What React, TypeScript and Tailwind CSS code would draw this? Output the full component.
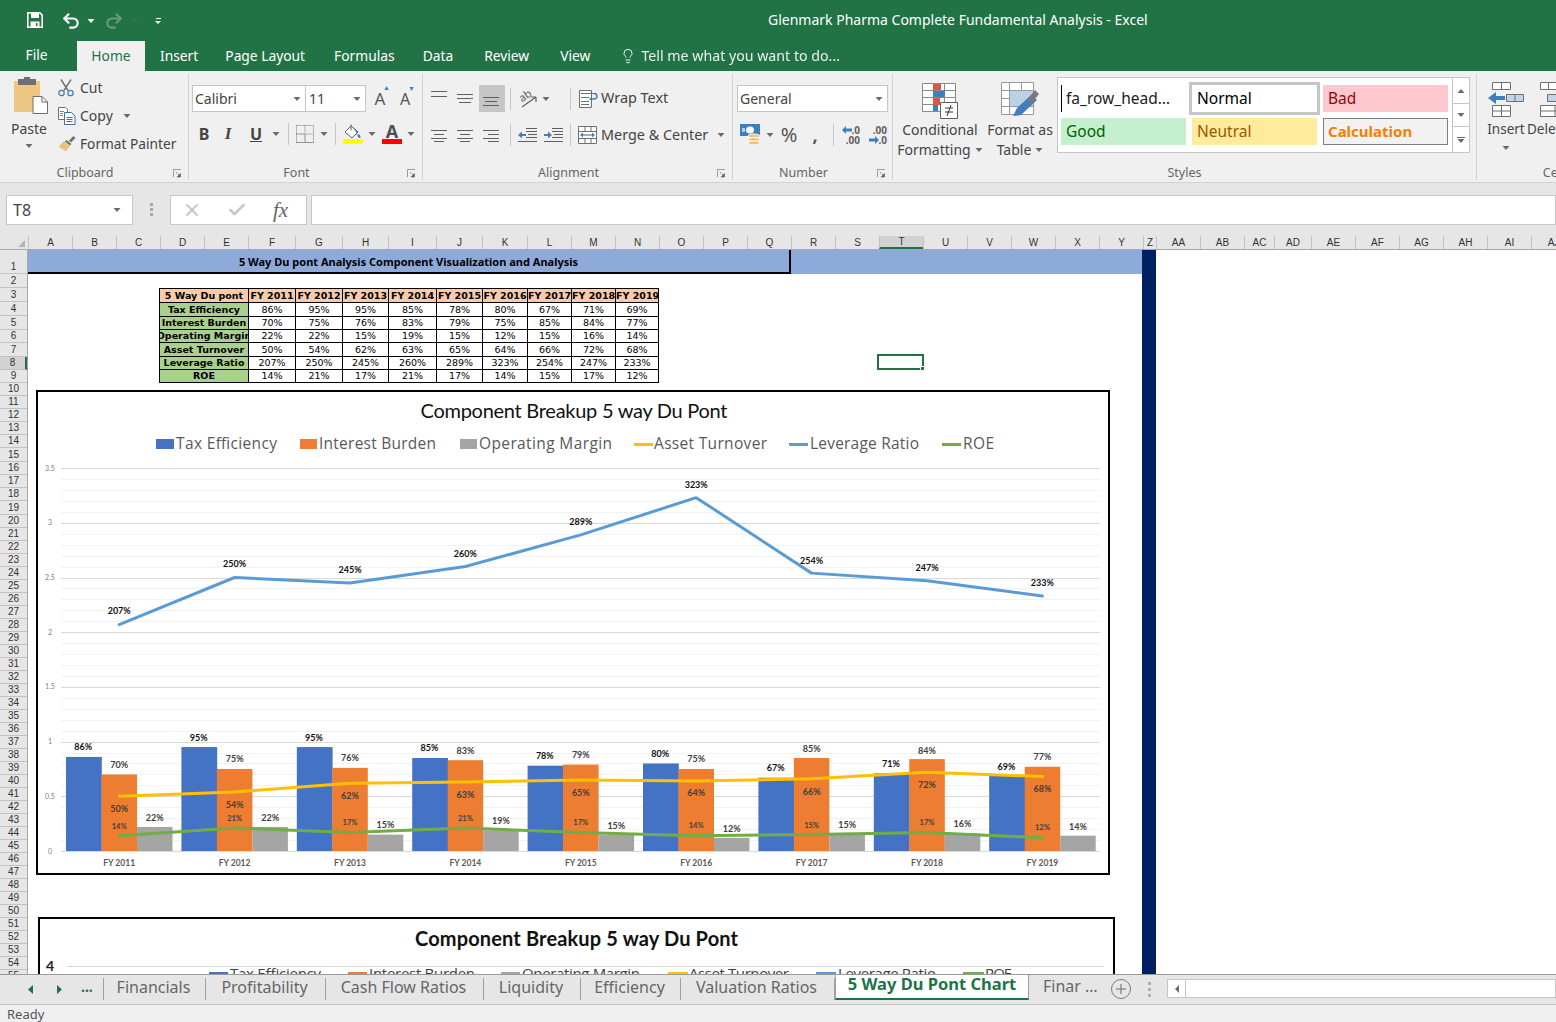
import React from 'react';
import { Undo2, Redo2, Lightbulb, Plus, X, Check } from 'lucide-react';

const years = ['FY 2011', 'FY 2012', 'FY 2013', 'FY 2014', 'FY 2015', 'FY 2016', 'FY 2017', 'FY 2018', 'FY 2019'];
const tax = [86, 95, 95, 85, 78, 80, 67, 71, 69];
const interest = [70, 75, 76, 83, 79, 75, 85, 84, 77];
const margin = [22, 22, 15, 19, 15, 12, 15, 16, 14];
const asset = [50, 54, 62, 63, 65, 64, 66, 72, 68];
const leverage = [207, 250, 245, 260, 289, 323, 254, 247, 233];
const roe = [14, 21, 17, 21, 17, 14, 15, 17, 12];

const taxY = [747, 738, 738, 748, 756, 754, 768, 764, 767];
const interestY = [765, 759, 758, 751, 755, 759, 749, 751, 757];
const marginY = [818, 818, 825, 821, 826, 829, 825, 824, 827];
const assetY = [809, 805, 796, 795, 793, 793, 792, 785, 789];
const leverageY = [611, 564, 570, 554, 522, 485, 561, 568, 583];
const roeY = [826, 818, 822, 818, 822, 825, 825, 822, 827];

const tableRows: [string, number[], string][] = [
  ['Tax Efficiency', tax, 'h-[14px]'],
  ['Interest Burden', interest, 'h-[13px]'],
  ['Operating Margin', margin, 'h-[13px]'],
  ['Asset Turnover', asset, 'h-[14px]'],
  ['Leverage Ratio', leverage, 'h-[13px]'],
  ['ROE', roe, 'h-[13px]'],
];

// rows that sit one pixel taller in the sheet
const tallRows = [2, 3, 4, 5, 7, 15, 19];

const columns: [string, string][] = [
  ['A', 'w-[44px]'], ['B', 'w-[44px]'], ['C', 'w-[44px]'], ['D', 'w-[44px]'], ['E', 'w-[44px]'],
  ['F', 'w-[47px]'], ['G', 'w-[47px]'], ['H', 'w-[46px]'], ['I', 'w-[48px]'], ['J', 'w-[46px]'],
  ['K', 'w-[45px]'], ['L', 'w-[44px]'], ['M', 'w-[44px]'], ['N', 'w-[44px]'], ['O', 'w-[44px]'],
  ['P', 'w-[44px]'], ['Q', 'w-[44px]'], ['R', 'w-[44px]'], ['S', 'w-[44px]'], ['T', 'w-[44px]'],
  ['U', 'w-[44px]'], ['V', 'w-[44px]'], ['W', 'w-[44px]'], ['X', 'w-[44px]'], ['Y', 'w-[44px]'],
  ['Z', 'w-[13px]'], ['AA', 'w-[44px]'], ['AB', 'w-[44px]'], ['AC', 'w-[30px]'], ['AD', 'w-[37px]'],
  ['AE', 'w-[44px]'], ['AF', 'w-[44px]'], ['AG', 'w-[44px]'], ['AH', 'w-[44px]'], ['AI', 'w-[44px]'],
  ['AJ', 'w-[44px]'],
];

const sheetTabs: [string, string][] = [
  ['Financials', 'w-[102px]'],
  ['Profitability', 'w-[120px]'],
  ['Cash Flow Ratios', 'w-[158px]'],
  ['Liquidity', 'w-[97px]'],
  ['Efficiency', 'w-[100px]'],
  ['Valuation Ratios', 'w-[154px]'],
];

const Caret = ({ className = '' }: { className?: string }) => (
  <svg width="8" height="4" viewBox="0 0 8 4" className={`flex-none ${className}`}>
    <path d="M0.5 0h7L4 4z" fill="#6a6a6a" />
  </svg>
);

const Launcher = () => (
  <svg width="9" height="9" viewBox="0 0 9 9" className="flex-none">
    <path d="M0.5 8V0.5H8" fill="none" stroke="#9a9a9a" />
    <path d="M3 3l4 4M7.5 4.5v3.5H4z" fill="#666" stroke="#666" strokeWidth="0.7" />
  </svg>
);

const Sep = ({ className = '' }: { className?: string }) => <div className={`w-px h-[22px] bg-[#c6c6c6] flex-none ${className}`} />;

// horizontal text lines used by the alignment and indent buttons
const Lines = ({ rows }: { rows: [number, number, number][] }) => (
  <svg width="18" height="16" viewBox="0 0 18 16">
    {rows.map(([y, a, b], i) => (
      <path key={i} d={`M${a} ${y + 0.5}H${b}`} stroke="#5f5f5f" />
    ))}
  </svg>
);

const PasteIcon = () => (
  <svg width="36" height="38" viewBox="0 0 36 38" className="ml-[4px]">
    <path d="M1 4h26v31H1z" fill="#eec683" />
    <path d="M5 2h18v6H5z" fill="#6f6f6f" />
    <path d="M11 0h6v3h-6z" fill="#6f6f6f" />
    <path d="M20 19.5h9l5.500 5.500v11.500H20z" fill="#fff" stroke="#6f6f6f" />
    <path d="M29 19.500v5.500h5.500" fill="none" stroke="#6f6f6f" />
  </svg>
);

const CutIcon = () => (
  <svg width="16" height="18" viewBox="0 0 16 18">
    <path d="M3 0.500l7 11M13 0.500l-7 11" stroke="#6f6f6f" strokeWidth="1.400" fill="none" />
    <circle cx="3.500" cy="14" r="2.700" fill="none" stroke="#3f7fbf" strokeWidth="1.300" />
    <circle cx="12.500" cy="14" r="2.700" fill="none" stroke="#3f7fbf" strokeWidth="1.300" />
  </svg>
);

const CopyIcon = () => (
  <svg width="18" height="18" viewBox="0 0 18 18">
    <path d="M0.500 0.500h7l2 2v10h-9z" fill="#fff" stroke="#6f6f6f" />
    <path d="M6.500 5.500h7l3.500 3.500v8.500H6.500z" fill="#fff" stroke="#3f6f9f" />
    <path d="M8.500 10.500h6M8.500 12.500h6M8.500 14.500h6" stroke="#3f6f9f" />
    <path d="M2 4.500h4M2 6.500h3M2 8.500h3" stroke="#7f7f7f" />
  </svg>
);

const PainterIcon = () => (
  <svg width="18" height="16" viewBox="0 0 18 16">
    <path d="M6 5l6 5-4 5.500-7.500-5z" fill="#e9c27f" />
    <path d="M7 5.500l5 4 1.500-1.500-5-4z" fill="#6f6f6f" />
    <path d="M11 4.500l4.500-4.500 2 2-4.500 4.500z" fill="#6f6f6f" />
  </svg>
);

const BorderIcon = () => (
  <svg width="18" height="18" viewBox="0 0 18 18">
    <path d="M0.500 0.500h17v17M0.500 0.500v17M9 0.500v8M9.500 9h8" fill="none" stroke="#7a7a7a" strokeDasharray="1 1" />
    <path d="M0 17.500h18M9 9v8M0 9h9" fill="none" stroke="#7a7a7a" strokeWidth="0.800" />
  </svg>
);

const FillIcon = () => (
  <svg width="20" height="20" viewBox="0 0 20 20">
    <path d="M2 8l6-6 7 6-6 6z" fill="#fff" stroke="#5f5f5f" />
    <path d="M8 0.500v6" stroke="#5f5f5f" />
    <path d="M10 3l5 5-2 2.500h3.500c1 1.500 1.500 2.500 0.500 3.500-2 0-3-2-2.500-3.500z" fill="#3f7fbf" />
    <path d="M0 15h20v5H0z" fill="#ffff00" />
  </svg>
);

const FontColorIcon = () => (
  <div className="flex flex-col items-center w-5 h-5 relative">
    <span className="text-[18px] leading-[15px] font-bold text-[#505050]">A</span>
    <div className="w-5 h-[5px] bg-[#ff0000]" />
  </div>
);

const OrientIcon = () => (
  <svg width="20" height="20" viewBox="0 0 20 20">
    <text x="1" y="11" fontSize="11" fill="#5f5f5f" transform="rotate(-35 6 9)">ab</text>
    <path d="M3 18L17 8M17 8h-5M17 8v5" fill="none" stroke="#5f5f5f" strokeWidth="1.200" />
  </svg>
);

const WrapIcon = () => (
  <svg width="20" height="18" viewBox="0 0 20 18">
    <path d="M0.500 0.500h12v17h-12z" fill="#fff" stroke="#6f6f6f" />
    <path d="M2 3.500h14M2 7.500h8M2 11.500h8M2 14.500h8" stroke="#6f6f6f" />
    <path d="M15 3.500c4 0 4 5.500 0 5.500h-3" fill="none" stroke="#3f7fbf" strokeWidth="1.400" />
    <path d="M10 9l3-2.500v5z" fill="#3f7fbf" />
  </svg>
);

const MergeIcon = () => (
  <svg width="20" height="18" viewBox="0 0 20 18">
    <path d="M0.500 0.500h18v17h-18zM0.500 5.500h18M0.500 12.500h18M7 0.500v5M13 0.500v5M7 12.500v5M13 12.500v5" fill="#fff" stroke="#6f6f6f" />
    <path d="M3 9h13" stroke="#3f7fbf" strokeWidth="1.200" />
    <path d="M2 9l3-2.500v5zM17 9l-3-2.500v5z" fill="#3f7fbf" />
  </svg>
);

const IndentIcon = ({ flip }: { flip?: boolean }) => (
  <svg width="20" height="16" viewBox="0 0 20 16">
    <path d="M8 1.500h11M8 4.500h11M10 7.500h9M8 10.500h11M0 14.500h19" stroke="#5f5f5f" />
    {flip ? (
      <path d="M0 7h4V4.500l4 3.500-4 3.500V9H0z" fill="#3f7fbf" />
    ) : (
      <path d="M8 7H4V4.500L0 8l4 3.500V9h4z" fill="#3f7fbf" />
    )}
  </svg>
);

const MoneyIcon = () => (
  <svg width="22" height="22" viewBox="0 0 22 22">
    <path d="M0 0h20v12H0z" fill="#3f7fbf" />
    <ellipse cx="10" cy="6" rx="4" ry="3.500" fill="#fff" />
    <path d="M2 4h3v4H2z" fill="#fff" opacity="0.600" />
    <ellipse cx="14" cy="12" rx="6" ry="2" fill="#f0c27a" stroke="#fff" />
    <ellipse cx="14" cy="15.500" rx="6" ry="2" fill="#f0c27a" stroke="#fff" />
    <ellipse cx="14" cy="19" rx="6" ry="2" fill="#f0c27a" stroke="#fff" />
  </svg>
);

const DecimalIcon = ({ more }: { more?: boolean }) => (
  <div className="relative w-[18px] h-[20px] text-[10px] leading-[10px] font-bold text-[#5f5f5f] text-right">
    <div>{more ? '.0' : '.00'}</div>
    <div>{more ? '.00' : '.0'}</div>
    <svg width="10" height="8" viewBox="0 0 10 8" className={`absolute left-0 ${more ? 'top-[1px]' : 'top-[11px]'}`}>
      {more ? <path d="M0 4l4-4v2.500h6v3H4V8z" fill="#3f7fbf" /> : <path d="M10 4L6 0v2.500H0v3h6V8z" fill="#3f7fbf" />}
    </svg>
  </div>
);

const CondIcon = () => (
  <svg width="36" height="36" viewBox="0 0 36 36">
    <path d="M0.500 0.500h33v28h-33zM0.500 7.500h33M0.500 14.500h33M0.500 21.500h33M11.500 0.500v28M22.500 0.500v28" fill="#fff" stroke="#8a8a8a" />
    <path d="M11 1h8v6h-8zM11 15h7v7h-7z" fill="#d9593a" />
    <path d="M11 8h12v6H11zM11 22h5v6h-5z" fill="#3f7fbf" />
    <path d="M18.500 19.500h17v16h-17z" fill="#fff" stroke="#5f5f5f" />
    <path d="M23 25h8M23 29h8M29 22l-4 11" stroke="#333" fill="none" />
  </svg>
);

const TableIcon = () => (
  <svg width="38" height="36" viewBox="0 0 38 36">
    <path d="M0.500 0.500h32v32h-32zM0.500 8.500h32M0.500 16.500h32M0.500 24.500h32M8.500 0.500v32M20.500 0.500v32" fill="#fff" stroke="#9a9a9a" />
    <path d="M9 9h23v15H9z" fill="#bcd0e6" />
    <path d="M12 34l8-1 16-15-6-5-14 13z" fill="#3f7fbf" />
    <path d="M26 18l8-10 4 4-8 10z" fill="#7a7a7a" />
  </svg>
);

const InsertIcon = () => (
  <svg width="36" height="36" viewBox="0 0 36 36">
    <path d="M4.500 1.500h18v7h-18zM13.500 1.500v7M4.500 24.500h18v11h-18zM4.500 30h18M13.500 24.500v11" fill="#fff" stroke="#6f6f6f" />
    <path d="M18.500 13.500h17v7h-17zM27 13.500v7" fill="#c3d4e8" stroke="#6f6f6f" />
    <path d="M0 17l8-6v4h9v4H8v4z" fill="#3f7fbf" />
  </svg>
);

const DeleteIcon = () => (
  <svg width="30" height="36" viewBox="0 0 30 36" className="ml-[13px]">
    <path d="M0.500 1.500h16v7h-16zM8.500 1.500v7M0.500 24.500h30v11h-30zM0.500 30h30M15 24.500v11" fill="#fff" stroke="#6f6f6f" />
    <path d="M7.500 13.500h20v7h-20z" fill="#c3d4e8" stroke="#6f6f6f" />
  </svg>
);

const Group = ({ w, label, launcher, children }: { w: string; label: string; launcher?: boolean; children: React.ReactNode }) => (
  <div className={`${w} flex-none flex flex-col border-r border-[#d2d2d2] h-[106px]`}>
    <div className="h-[90px]">{children}</div>
    <div className={`h-[14px] mt-[2px] relative flex items-center justify-center text-[12.500px] text-[#666] ${launcher ? 'pr-[18px]' : ''}`}>
      {label}
      {launcher && (
        <span className="absolute right-[6px] top-[3px]">
          <Launcher />
        </span>
      )}
    </div>
  </div>
);

const RibbonText = ({ children, className = '', size = 'text-[14px]' }: { children: React.ReactNode; className?: string; size?: string }) => (
  <span className={`${size} leading-none text-[#444] whitespace-nowrap ${className}`}>{children}</span>
);

const Ribbon = () => (
  <div className="h-[112px] bg-[#f0f0f0] border-b border-[#d2d2d2] pt-[3px] flex overflow-hidden">
    <Group w="w-[189px]" label="Clipboard" launcher>
      <div className="flex h-full">
        <div className="w-[58px] flex flex-col items-center pt-[3px]">
          <PasteIcon />
          <RibbonText className="mt-[7px]">Paste</RibbonText>
          <Caret className="mt-[8px]" />
        </div>
        <div className="flex flex-col">
          <div className="h-7 flex items-center gap-[6px]">
            <CutIcon />
            <RibbonText>Cut</RibbonText>
          </div>
          <div className="h-7 flex items-center gap-[4px]">
            <CopyIcon />
            <RibbonText>Copy</RibbonText>
            <Caret className="ml-[6px]" />
          </div>
          <div className="h-7 flex items-center gap-1">
            <PainterIcon />
            <RibbonText size="text-[13.700px]">Format Painter</RibbonText>
          </div>
        </div>
      </div>
    </Group>
    <Group w="w-[234px]" label="Font" launcher>
      <div className="pl-[3px] pt-[11px]">
        <div className="flex items-center h-[27px]">
          <div className="w-[114px] h-full bg-white border border-[#c6c6c6] flex items-center justify-between pl-[2px] pr-[4px]">
            <RibbonText>Calibri</RibbonText>
            <Caret />
          </div>
          <div className="w-[60px] h-full bg-white border border-[#c6c6c6] border-l-0 flex items-center justify-between pl-[3px] pr-[4px]">
            <RibbonText>11</RibbonText>
            <Caret />
          </div>
          <span className="ml-[6px] text-[17px] text-[#555] relative w-4 text-center">
            A<span className="absolute -right-[2px] -top-[3px] text-[7px] text-[#3f7fbf]">▲</span>
          </span>
          <span className="ml-[9px] text-[16px] text-[#555] relative w-4 text-center">
            A<span className="absolute -right-[2px] -top-[3px] text-[7px] text-[#3f7fbf]">▼</span>
          </span>
        </div>
        <div className="flex items-center h-6 mt-[10px]">
          <span className="w-6 text-center text-[16px] font-bold text-[#444]">B</span>
          <span className="w-6 text-center text-[17px] font-bold italic text-[#444] font-['Liberation_Serif',serif]">I</span>
          <span className="ml-1 w-6 text-center text-[16px] font-bold underline text-[#444]">U</span>
          <Caret className="ml-1" />
          <Sep className="ml-2" />
          <div className="ml-[7px] flex-none"><BorderIcon /></div>
          <Caret className="ml-[6px]" />
          <Sep className="ml-[7px]" />
          <div className="ml-[7px] flex-none"><FillIcon /></div>
          <Caret className="ml-[5px]" />
          <div className="ml-[6px] flex-none"><FontColorIcon /></div>
          <Caret className="ml-[5px]" />
        </div>
      </div>
    </Group>
    <Group w="w-[310px]" label="Alignment" launcher>
      <div className="pl-1 pt-[11px]">
        <div className="flex items-center h-[27px]">
          <div className="w-[26px] h-full flex items-center justify-center"><Lines rows={[[0, 0, 16], [5, 0, 16]]} /></div>
          <div className="w-[26px] h-full flex items-center justify-center"><Lines rows={[[3, 0, 16], [7, 0, 16], [11, 2, 14]]} /></div>
          <div className="w-[26px] h-full flex items-center justify-center bg-[#c6c6c6]"><Lines rows={[[6, 0, 16], [10, 2, 14], [14, 0, 16]]} /></div>
          <Sep className="ml-[5px]" />
          <div className="ml-2 flex-none"><OrientIcon /></div>
          <Caret className="ml-[3px]" />
          <Sep className="ml-[20px]" />
          <div className="ml-2 flex-none"><WrapIcon /></div>
          <RibbonText className="ml-[2px]" size="text-[14.400px]">Wrap Text</RibbonText>
        </div>
        <div className="flex items-center h-6 mt-[11px]">
          <div className="w-[26px] flex justify-center"><Lines rows={[[3, 0, 16], [7, 3, 13], [11, 0, 16], [14, 3, 13]]} /></div>
          <div className="w-[26px] flex justify-center"><Lines rows={[[3, 0, 16], [7, 3, 13], [11, 0, 16], [14, 3, 13]]} /></div>
          <div className="w-[26px] flex justify-center"><Lines rows={[[3, 0, 16], [7, 5, 16], [11, 0, 16], [14, 5, 16]]} /></div>
          <Sep className="ml-[5px]" />
          <div className="ml-[7px] flex-none"><IndentIcon /></div>
          <div className="ml-[6px] flex-none"><IndentIcon flip /></div>
          <Sep className="ml-[6px]" />
          <div className="ml-[7px] flex-none"><MergeIcon /></div>
          <RibbonText className="ml-[3px]" size="text-[14.400px]">Merge &amp; Center</RibbonText>
          <Caret className="ml-[9px]" />
        </div>
      </div>
    </Group>
    <Group w="w-[160px]" label="Number" launcher>
      <div className="pl-1 pt-[11px]">
        <div className="w-[151px] h-[27px] bg-white border border-[#c6c6c6] flex items-center justify-between pl-[2px] pr-[4px]">
          <RibbonText>General</RibbonText>
          <Caret />
        </div>
        <div className="flex items-center h-6 mt-[11px] pl-[3px]">
          <MoneyIcon />
          <Caret className="ml-1" />
          <span className="ml-[5px] text-[20px] text-[#555] w-5 text-center leading-none">%</span>
          <span className="ml-[6px] text-[18px] font-bold text-[#555] w-5 text-center leading-none">,</span>
          <Sep className="ml-2" />
          <div className="ml-2 flex-none"><DecimalIcon more /></div>
          <div className="ml-[9px] flex-none"><DecimalIcon /></div>
        </div>
      </div>
    </Group>
    <Group w="w-[584px]" label="Styles">
      <div className="flex">
        <div className="w-[94px] flex flex-col items-center pt-[9px]">
          <CondIcon />
          <RibbonText className="mt-[4px]">Conditional</RibbonText>
          <div className="flex items-center gap-1 mt-[6px]">
            <RibbonText>Formatting</RibbonText>
            <Caret />
          </div>
        </div>
        <div className="w-[66px] flex flex-col items-center pt-[8px]">
          <TableIcon />
          <RibbonText className="mt-[5px]">Format as</RibbonText>
          <div className="flex items-center gap-1 mt-[6px]">
            <RibbonText>Table</RibbonText>
            <Caret />
          </div>
        </div>
        <div className="ml-1 mt-[3px] w-[413px] h-[76px] bg-white border border-[#c6c6c6] flex">
          <div className="grid grid-cols-[125px_125px_125px] grid-rows-[27px_27px] gap-x-[6px] gap-y-[6px] pl-[3px] pt-[7px] text-[15.500px] leading-[27px]">
            <div className="border-l border-black pl-[4px] text-[#222] whitespace-nowrap">fa_row_head…</div>
            <div className="outline-solid outline-[3px] outline-offset-0 outline-[#c6c6c6] pl-[5px] text-black">Normal</div>
            <div className="bg-[#ffc7ce] pl-[5px] text-[#9c0006]">Bad</div>
            <div className="bg-[#c6efce] pl-[5px] text-[#006100]">Good</div>
            <div className="bg-[#ffeb9c] pl-[5px] text-[#9c5700]">Neutral</div>
            <div className="bg-[#f2f2f2] border border-[#7f7f7f] pl-[4px] leading-[25px] font-bold text-[#fa7d00] text-[15px]">Calculation</div>
          </div>
          <div className="ml-auto w-[17px] flex flex-col border-l border-[#c6c6c6]">
            <div className="h-[26px] border-b border-[#c6c6c6] flex items-center justify-center"><Caret className="rotate-180" /></div>
            <div className="h-[23px] border-b border-[#c6c6c6] flex items-center justify-center"><Caret /></div>
            <div className="flex-1 flex flex-col gap-px items-center justify-center">
              <div className="w-2 h-px bg-[#6a6a6a]" />
              <Caret />
            </div>
          </div>
        </div>
      </div>
    </Group>
    <Group w="w-[160px]" label="Cells">
      <div className="flex">
        <div className="w-[58px] flex flex-col items-center pt-[7px]">
          <InsertIcon />
          <RibbonText className="mt-[6px]" size="text-[13.500px]">Insert</RibbonText>
          <Caret className="mt-[9px]" />
        </div>
        <div className="-ml-[8px] flex flex-col items-start pt-[7px]">
          <DeleteIcon />
          <RibbonText className="mt-[6px]" size="text-[13.500px]">Delete</RibbonText>
        </div>
      </div>
    </Group>
  </div>
);

const x0 = (i: number) => 66 + 115.4 * i;
const yOf = (v: number) => 851 - v * 1.094;
const linePoints = (vals: number[]) => vals.map((v, i) => `${x0(i) + 53.2},${yOf(v)}`).join(' ');

const Label = ({ x, y, size = 9, fill = '#111', children }: { x: number; y: number; size?: number; fill?: string; children: React.ReactNode }) => (
  <text x={x} y={y + 3} fontSize={size} fontWeight={700} fill={fill} textAnchor="middle">
    {children}
  </text>
);

const legendOne: [string, boolean, string, number, number, number, number][] = [
  ['Tax Efficiency', true, '#4472c4', 156, 174, 176, 101],
  ['Interest Burden', true, '#ed7d31', 300, 317, 319, 117],
  ['Operating Margin', true, '#a5a5a5', 460, 477, 479, 133],
  ['Asset Turnover', false, '#ffc000', 634, 653, 654, 113],
  ['Leverage Ratio', false, '#5b9bd5', 789, 808, 810, 109],
  ['ROE', false, '#70ad47', 942, 961, 963, 31],
];

const legendTwo: [string, string, number, number, number, number][] = [
  ['Tax Efficiency', '#4472c4', 209, 228, 230, 91],
  ['Interest Burden', '#ed7d31', 348, 367, 369, 106],
  ['Operating Margin', '#a5a5a5', 501, 520, 522, 118],
  ['Asset Turnover', '#ffc000', 668, 688, 689, 100],
  ['Leverage Ratio', '#5b9bd5', 816, 836, 838, 98],
  ['ROE', '#70ad47', 963, 984, 985, 27],
];

const ChartOne = () => (
  <svg width="1070" height="481" viewBox="38 392 1070 481" className="block font-['Lato',sans-serif]">
    <text x="574" y="418" fontSize="20" fill="#111" textAnchor="middle" textLength="307">Component Breakup 5 way Du Pont</text>
    {legendOne.map(([name, box, color, a, b, tx, tw]) => (
      <g key={name}>
        {box ? <rect x={a} y={439} width={b - a} height={10} fill={color} /> : <rect x={a} y={443} width={b - a} height={3} fill={color} />}
        <text x={tx} y={449} fontSize="15.500" fill="#595959" textLength={tw} className="font-['Open_Sans',sans-serif]">{name}</text>
      </g>
    ))}
    {Array.from({ length: 36 }, (_, i) => i).map((i) => (
      <path key={i} d={`M61 ${Math.round(851 - i * 10.94) + 0.5}H1100`} stroke={i % 5 === 0 ? '#d9d9d9' : '#f2f2f2'} />
    ))}
    {['0', '0.5', '1', '1.5', '2', '2.5', '3', '3.5'].map((t, i) => (
      <text key={t} x="50" y={851 - i * 54.7 + 2.500} fontSize="7" fill="#7f7f7f" textAnchor="middle">{t}</text>
    ))}
    {years.map((_, i) => (
      <g key={i}>
        <rect x={x0(i)} y={yOf(tax[i])} width={35.800} height={tax[i] * 1.094} fill="#4472c4" />
        <rect x={x0(i) + 35.500} y={yOf(interest[i])} width={35.500} height={interest[i] * 1.094} fill="#ed7d31" />
        <rect x={x0(i) + 71} y={yOf(margin[i])} width={35.500} height={margin[i] * 1.094} fill="#a5a5a5" />
      </g>
    ))}
    <polyline points={linePoints(leverage)} fill="none" stroke="#5b9bd5" strokeWidth="3" strokeLinejoin="round" strokeLinecap="round" />
    <polyline points={linePoints(asset)} fill="none" stroke="#ffc000" strokeWidth="3" strokeLinejoin="round" strokeLinecap="round" />
    <polyline points={linePoints(roe)} fill="none" stroke="#70ad47" strokeWidth="3" strokeLinejoin="round" strokeLinecap="round" />
    {years.map((year, i) => {
      const c = x0(i) + 53.200;
      return (
        <g key={year}>
          <Label x={c - 36} y={taxY[i]}>{tax[i]}%</Label>
          <Label x={c} y={interestY[i]} fill="#404040">{interest[i]}%</Label>
          <Label x={c + 35.500} y={marginY[i]} fill="#404040">{margin[i]}%</Label>
          <Label x={c} y={assetY[i]} fill="#404040">{asset[i]}%</Label>
          <Label x={c} y={leverageY[i]}>{leverage[i]}%</Label>
          <Label x={c} y={roeY[i]} size={7.500} fill="#404040">{roe[i]}%</Label>
          <Label x={c} y={863} size={8.500} fill="#595959">{year}</Label>
        </g>
      );
    })}
  </svg>
);

const ChartTwo = () => (
  <svg width="1073" height="76" viewBox="40 919 1073 76" className="block font-['Lato',sans-serif]">
    <text x="576.500" y="946" fontSize="20" fontWeight={700} fill="#111" textAnchor="middle" textLength="323">Component Breakup 5 way Du Pont</text>
    <text x="46" y="971" fontSize="14" fontWeight={700} fill="#222">4</text>
    <path d="M67 966.500H1104" stroke="#d9d9d9" />
    {legendTwo.map(([name, color, a, b, tx, tw]) => (
      <g key={name}>
        <rect x={a} y={972} width={b - a} height={10} fill={color} />
        <text x={tx} y={979} fontSize="15" fill="#404040" textLength={tw} className="font-['Open_Sans',sans-serif]">{name}</text>
      </g>
    ))}
  </svg>
);

const DataTable = () => (
  <table className="ml-[131px] border-collapse table-fixed w-[499px] font-['DejaVu_Sans',sans-serif] text-[9.500px] leading-none text-black">
    <colgroup>
      <col className="w-[89px]" />
      <col className="w-[47px]" />
      <col className="w-[47px]" />
      <col className="w-[46px]" />
      <col className="w-[48px]" />
      <col className="w-[46px]" />
      <col className="w-[45px]" />
      <col className="w-[44px]" />
      <col className="w-[44px]" />
      <col className="w-[43px]" />
    </colgroup>
    <tbody>
      <tr className="h-[14px] bg-[#f8cbad] font-bold">
        <td className="border border-black p-0 text-center overflow-hidden whitespace-nowrap">5 Way Du pont</td>
        {years.map((y) => (
          <td key={y} className="border border-black p-0 text-center whitespace-nowrap overflow-hidden">{y}</td>
        ))}
      </tr>
      {tableRows.map(([name, vals, h]) => (
        <tr key={name} className={h}>
          <td className="border border-black p-0 bg-[#a9d18e] font-bold text-center whitespace-nowrap overflow-hidden">
            <div className="flex justify-center">{name}</div>
          </td>
          {vals.map((v, i) => (
            <td key={i} className="border border-black p-0 text-center">{v}%</td>
          ))}
        </tr>
      ))}
    </tbody>
  </table>
);

const Grid = () => (
  <div className="h-[724px] flex relative overflow-hidden bg-white">
    <div className="w-[28px] flex-none bg-[#e6e6e6] border-r border-[#a8a8a8] font-['Liberation_Sans',sans-serif] text-[10px] text-[#333]">
      {Array.from({ length: 56 }, (_, i) => i + 1).map((n) => (
        <div
          key={n}
          className={`flex items-end justify-center border-b border-[#c2c2c2] leading-[12px] ${n === 1 ? 'h-[24px]' : tallRows.includes(n) ? 'h-[14px]' : 'h-[13px]'} ${n === 8 ? 'bg-[#d2d2d2] border-r-2 border-r-[#217346]' : ''}`}
        >
          {n}
        </div>
      ))}
    </div>
    <div className="w-[1114px] flex-none">
      <div className="h-6 bg-[#8eaadb] flex">
        <div className="w-[763px] border-b-2 border-r-2 border-black flex items-center justify-center pt-[3px] font-['Noto_Sans',sans-serif] text-[11px] font-bold text-black">
          5 Way Du pont Analysis Component Visualization and Analysis
        </div>
      </div>
      <div className="mt-[14px]">
        <DataTable />
      </div>
      <div className="mt-[7px] ml-[8px] w-[1074px] h-[485px] border-2 border-black">
        <ChartOne />
      </div>
      <div className="mt-[42px] ml-[10px] w-[1077px] h-[80px] border-2 border-black">
        <ChartTwo />
      </div>
    </div>
    <div className="w-[14px] flex-none bg-[#002060]" />
    <div className="absolute left-[877px] top-[104px] w-[47px] h-[16px] border-2 border-[#217346]">
      <div className="absolute -right-[3px] -bottom-[3px] w-[5px] h-[5px] bg-[#217346] border border-white" />
    </div>
  </div>
);

const SheetTabs = () => (
  <div className="h-[30px] bg-[#e6e6e6] border-t border-[#9a9a9a] flex items-start text-[16px] text-[#666] overflow-hidden">
    <div className="w-[104px] h-[22px] mt-[3px] flex-none flex items-center border-r border-[#a0a0a0]">
      <svg width="6" height="9" viewBox="0 0 6 9" className="ml-[28px]"><path d="M5 0v9L0 4.500z" fill="#217346" /></svg>
      <svg width="6" height="9" viewBox="0 0 6 9" className="ml-[22px]"><path d="M1 0v9l5-4.500z" fill="#217346" /></svg>
      <span className="ml-[19px] text-[#217346] font-bold text-[14px] leading-none pb-1">...</span>
    </div>
    {sheetTabs.map(([name, w]) => (
      <div key={name} className={`${w} h-[22px] mt-[3px] pb-[5px] pr-[2px] flex-none flex items-center justify-center border-r border-[#a0a0a0] whitespace-nowrap`}>
        {name}
      </div>
    ))}
    <div className="w-[194px] h-[26px] -mt-px pb-[3px] flex-none bg-white border-x border-[#a0a0a0] border-b-2 border-b-[#217346] flex items-center justify-center text-[16.500px] font-bold text-[#217346] whitespace-nowrap">
      5 Way Du Pont Chart
    </div>
    <div className="w-[82px] h-[20px] mt-[1px] flex-none pl-[14px] flex items-center whitespace-nowrap">Finar …</div>
    <div className="w-5 h-5 mt-[4px] flex-none rounded-full border border-[#7a7a7a] flex items-center justify-center">
      <Plus size={16} strokeWidth={1.500} color="#6a6a6a" />
    </div>
    <div className="ml-[17px] mt-[7px] flex-none flex flex-col gap-[3px]">
      <div className="w-[3px] h-[3px] bg-[#b0b0b0]" />
      <div className="w-[3px] h-[3px] bg-[#b0b0b0]" />
      <div className="w-[3px] h-[3px] bg-[#b0b0b0]" />
    </div>
    <div className="ml-[16px] mt-[4px] flex-1 h-[19px] bg-white border border-[#c6c6c6] flex">
      <div className="w-[18px] h-full border-r border-[#c6c6c6] flex items-center justify-center">
        <svg width="4" height="8" viewBox="0 0 4 8"><path d="M4 0v8L0 4z" fill="#6a6a6a" /></svg>
      </div>
    </div>
  </div>
);

export default function App() {
  const tabs = [
    ['Insert', 'ml-[15px]'],
    ['Page Layout', 'ml-[27px]'],
    ['Formulas', 'ml-[29px]'],
    ['Data', 'ml-[28px]'],
    ['Review', 'ml-[31px]'],
    ['View', 'ml-[31px]'],
  ];
  return (
    <div className="w-[1556px] h-[1022px] overflow-hidden bg-[#e6e6e6] font-['Noto_Sans',sans-serif]">
      <div className="h-[41px] bg-[#217346] flex items-center relative text-white">
        <svg width="16" height="16" viewBox="0 0 16 16" className="ml-[27px] -mt-[2px]">
          <path d="M0.800 0.800h12l2.400 2.400v12H0.800z" fill="none" stroke="#fff" strokeWidth="1.600" />
          <path d="M4 1v5h8V1z" fill="#fff" />
          <path d="M3.500 9.500h9V15h-9z" fill="#fff" />
          <path d="M9 11h1.500v3H9z" fill="#217346" />
        </svg>
        <Undo2 size={20} strokeWidth={2.600} className="ml-[18px]" />
        <Caret className="ml-[6px] brightness-[4]" />
        <Redo2 size={20} strokeWidth={2.600} className="ml-[9px] opacity-30" />
        <Caret className="ml-[7px] opacity-40" />
        <div className="ml-[16px] flex flex-col items-center gap-[2px]">
          <div className="w-[5px] h-px bg-white" />
          <svg width="6" height="3" viewBox="0 0 6 3"><path d="M0 0h6L3 3z" fill="#fff" /></svg>
        </div>
        <span className="absolute left-[768px] top-[13px] text-[14px] leading-none whitespace-nowrap">Glenmark Pharma Complete Fundamental Analysis - Excel</span>
      </div>
      <div className="h-[30px] bg-[#217346] flex text-[13.800px] text-white">
        <div className="w-[77px] pr-[4px] flex items-center justify-center pb-[1px]">File</div>
        <div className="w-[68px] h-[30px] bg-[#f0f0f0] flex items-center justify-center text-[#217346]">Home</div>
        {tabs.map(([name, m]) => (
          <div key={name} className={`${m} flex items-center`}>{name}</div>
        ))}
        <div className="ml-[30px] flex items-center gap-[5px] opacity-90">
          <Lightbulb size={16} strokeWidth={1.500} />
          <span className="text-[14.200px]">Tell me what you want to do...</span>
        </div>
      </div>
      <Ribbon />
      <div className="h-[53px] pt-3 flex text-[#666]">
        <div className="ml-[6px] w-[127px] h-[30px] bg-white border border-[#c6c6c6] flex items-center justify-between pl-[6px] pr-[11px]">
          <span className="text-[16px] text-[#444]">T8</span>
          <Caret />
        </div>
        <div className="ml-[17px] mt-[8px] flex flex-col gap-[2px]">
          <div className="w-[3px] h-[3px] bg-[#a8a8a8]" />
          <div className="w-[3px] h-[3px] bg-[#a8a8a8]" />
          <div className="w-[3px] h-[3px] bg-[#a8a8a8]" />
        </div>
        <div className="ml-[17px] w-[137px] h-[30px] bg-white border border-[#c6c6c6] flex items-center">
          <X size={20} color="#c6c6c6" strokeWidth={2.200} className="ml-[11px]" />
          <Check size={20} color="#c6c6c6" strokeWidth={3} className="ml-[25px]" />
          <span className="ml-[26px] italic text-[21px] leading-none text-[#666] font-['Liberation_Serif',serif]">fx</span>
        </div>
        <div className="ml-1 flex-1 h-[30px] bg-white border border-[#c6c6c6]" />
      </div>
      <div className="h-[14px] flex bg-[#e6e6e6] border-b border-[#a8a8a8] font-['Liberation_Sans',sans-serif] text-[10px] text-[#333] overflow-hidden">
        <div className="w-[28px] flex-none flex items-end justify-end pr-[3px] pb-[2px]">
          <svg width="7" height="7" viewBox="0 0 7 7"><path d="M7 0v7H0z" fill="#b4b4b4" /></svg>
        </div>
        {columns.map(([c, w]) => (
          <div
            key={c}
            className={`${w} flex-none flex items-center justify-center border-l border-[#c2c2c2] ${c === 'T' ? 'bg-[#d2d2d2] border-b-2 border-b-[#217346]' : ''}`}
          >
            {c}
          </div>
        ))}
      </div>
      <Grid />
      <SheetTabs />
      <div className="h-[18px] bg-[#f0f0f0] border-t border-[#c6c6c6] pl-[7px] text-[13px] leading-[19px] text-[#555]">Ready</div>
    </div>
  );
}
